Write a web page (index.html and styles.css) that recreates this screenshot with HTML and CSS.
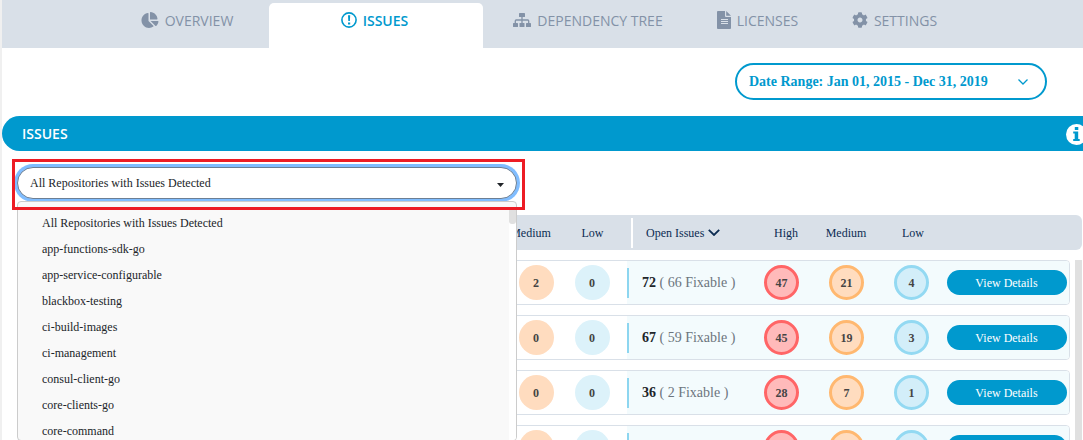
FILE: index.html
```html
<!DOCTYPE html>
<html lang="en">
<head>
<meta charset="utf-8">
<title>Issues</title>
<link rel="stylesheet" href="styles.css">
</head>
<body>
<div class="page">
  <nav class="tabs">
    <a class="tab tab-overview" href="#overview">
      <svg class="tab-icon" width="18" height="16" viewBox="0 0 544 512"><path fill="currentColor" d="M527.79 288H290.5l158.03 158.03c6.04 6.04 15.98 6.53 22.19.68 38.7-36.46 65.32-85.61 73.13-140.86 1.34-9.46-6.51-17.85-16.06-17.85zm-15.83-64.8C503.72 103.74 408.26 8.28 288.8.04 279.68-.59 272 7.1 272 16.24V240h223.77c9.14 0 16.82-7.68 16.19-16.8zM224 288V50.71c0-9.55-8.39-17.4-17.84-16.06C86.99 51.49-4.1 155.6.14 280.37 4.5 408.51 114.83 513.59 243.03 511.98c50.4-.63 96.97-16.87 135.26-44.03 7.9-5.6 8.42-17.23 1.57-24.08L224 288z"/></svg>
      <span class="tab-label">OVERVIEW</span></a>
    <a class="tab tab-active" href="#issues" aria-current="page">
      <svg class="tab-icon" width="16" height="16" viewBox="0 0 16 16"><circle cx="8" cy="8" r="7.1" fill="none" stroke="currentColor" stroke-width="1.6"/><path fill="currentColor" d="M7 3.2h2.2L8.9 9H7.3zM7 10.4h2.2v2.1H7z"/></svg>
      <span class="tab-label">ISSUES</span></a>
    <a class="tab" href="#dependency-tree">
      <svg class="tab-icon" width="18" height="16" viewBox="0 0 18 16"><g fill="currentColor"><rect x="6" y="1" width="6" height="4" rx=".6"/><rect x="0" y="11" width="5" height="4" rx=".6"/><rect x="6.5" y="11" width="5" height="4" rx=".6"/><rect x="13" y="11" width="5" height="4" rx=".6"/></g><path fill="none" stroke="currentColor" stroke-width="1.3" d="M9 5v6M2.3 11V8.9q0-.9.9-.9h11.6q.9 0 .9.9V11"/></svg>
      <span class="tab-label">DEPENDENCY TREE</span></a>
    <a class="tab" href="#licenses">
      <svg class="tab-icon" width="14" height="18" viewBox="0 0 14 18"><path fill="currentColor" fill-rule="evenodd" d="M.9 0H8v5.1q0 .9.9.9H14v11.1q0 .9-.9.9H.9Q0 18 0 17.1V.9Q0 0 .9 0zM9.200 0l4.800 4.800H9.200zM4 8v1h7V8zM4 10v1h7v-1zM4 12v1h7v-1z"/></svg>
      <span class="tab-label">LICENSES</span></a>
    <a class="tab" href="#settings">
      <svg class="tab-icon" width="16" height="16" viewBox="0 0 512 512"><path fill="currentColor" d="M487.4 315.7l-42.6-24.6c4.3-23.2 4.3-47 0-70.2l42.6-24.6c4.9-2.8 7.1-8.6 5.5-14-11.100-35.600-30-67.800-54.700-94.600-3.800-4.100-10-5.100-14.800-2.300L380.800 110c-17.900-15.400-38.500-27.300-60.800-35.100V25.800c0-5.600-3.900-10.500-9.400-11.700-36.700-8.200-74.300-7.800-109.200 0-5.500 1.200-9.400 6.100-9.400 11.700V75c-22.200 7.900-42.800 19.800-60.800 35.100L88.700 85.500c-4.900-2.800-11-1.900-14.800 2.300-24.700 26.700-43.600 58.900-54.700 94.600-1.700 5.400.6 11.200 5.500 14L67.300 221c-4.300 23.200-4.300 47 0 70.200l-42.600 24.600c-4.900 2.800-7.100 8.600-5.500 14 11.100 35.600 30 67.800 54.700 94.600 3.800 4.100 10 5.100 14.800 2.300l42.600-24.600c17.900 15.400 38.500 27.300 60.800 35.100v49.200c0 5.600 3.900 10.500 9.400 11.700 36.700 8.200 74.300 7.800 109.200 0 5.500-1.200 9.400-6.100 9.400-11.700v-49.200c22.200-7.900 42.800-19.800 60.800-35.100l42.600 24.600c4.900 2.800 11 1.900 14.800-2.300 24.700-26.700 43.600-58.900 54.700-94.600 1.500-5.500-.7-11.300-5.600-14.100zM256 336c-44.100 0-80-35.900-80-80s35.900-80 80-80 80 35.900 80 80-35.900 80-80 80z"/></svg>
      <span class="tab-label">SETTINGS</span></a>
  </nav>

  <div class="range-row">
    <div class="range">
      <select class="range-select" aria-label="Date range"><option>Date Range: Jan 01, 2015 - Dec 31, 2019</option></select>
      <svg class="range-chevron" width="10" height="6" viewBox="0 0 10 6"><path fill="none" stroke="currentColor" stroke-width="1.3" d="M.5.5 5 5 9.500.5"/></svg>
    </div>
  </div>

  <header class="section-bar">
    <h1 class="section-title">ISSUES</h1>
    <svg class="info-icon" width="21" height="21" viewBox="0 0 21 21" role="img" aria-label="Information"><circle cx="10.500" cy="10.500" r="10.500" fill="#fff"/><path fill="#0099ce" d="M8.800 3h3.500v3H8.800zM7.200 7.500h5V15h1.500v2H7.200v-2h1.500V9.500H7.200z"/></svg>
  </header>

  <div class="filter">
    <select class="repo-select" aria-label="Repository"><option>All Repositories with Issues Detected</option></select>
    <svg class="repo-caret" width="7" height="4" viewBox="0 0 7 4"><path fill="#212529" d="M0 0h7L3.500 4z"/></svg>
    <div class="menu">
      <ul class="menu-list">
        <li class="menu-item">All Repositories with Issues Detected</li>
        <li class="menu-item">app-functions-sdk-go</li>
        <li class="menu-item">app-service-configurable</li>
        <li class="menu-item">blackbox-testing</li>
        <li class="menu-item">ci-build-images</li>
        <li class="menu-item">ci-management</li>
        <li class="menu-item">consul-client-go</li>
        <li class="menu-item">core-clients-go</li>
        <li class="menu-item">core-command</li>
      </ul>
      <div class="menu-track"><div class="menu-thumb"></div></div>
    </div>
    <div class="highlight"></div>
  </div>

  <table class="issues">
    <thead>
      <tr class="head-row">
        <th></th><th>Medium</th><th class="head-low">Low</th>
        <th class="head-open">Open Issues <svg class="sort-icon" width="12" height="7" viewBox="0 0 12 7"><path fill="none" stroke="currentColor" stroke-width="1.800" d="M.8.8 6 6 11.200.8"/></svg></th>
        <th>High</th><th>Medium</th><th>Low</th><th></th>
      </tr>
    </thead>
    <tbody class="rows">
      <tr class="row">
        <td></td><td><span class="badge fixed-medium">2</span></td><td><span class="badge fixed-low">0</span></td>
        <td class="open"><span><b class="count">72</b> ( 66 Fixable )</span></td>
        <td class="tint"><span class="badge high">47</span></td><td class="tint"><span class="badge medium">21</span></td><td class="tint"><span class="badge low">4</span></td>
        <td class="tint"><button class="details" type="button">View Details</button></td>
      </tr>
      <tr class="row">
        <td></td><td><span class="badge fixed-medium">0</span></td><td><span class="badge fixed-low">0</span></td>
        <td class="open"><span><b class="count">67</b> ( 59 Fixable )</span></td>
        <td class="tint"><span class="badge high">45</span></td><td class="tint"><span class="badge medium">19</span></td><td class="tint"><span class="badge low">3</span></td>
        <td class="tint"><button class="details" type="button">View Details</button></td>
      </tr>
      <tr class="row">
        <td></td><td><span class="badge fixed-medium">0</span></td><td><span class="badge fixed-low">0</span></td>
        <td class="open"><span><b class="count">36</b> ( 2 Fixable )</span></td>
        <td class="tint"><span class="badge high">28</span></td><td class="tint"><span class="badge medium">7</span></td><td class="tint"><span class="badge low">1</span></td>
        <td class="tint"><button class="details" type="button">View Details</button></td>
      </tr>
      <tr class="row">
        <td></td><td><span class="badge fixed-medium"></span></td><td><span class="badge fixed-low"></span></td>
        <td class="open"></td>
        <td class="tint"><span class="badge high"></span></td><td class="tint"><span class="badge medium"></span></td><td class="tint"><span class="badge low"></span></td>
        <td class="tint"><button class="details" type="button" aria-label="View details"></button></td>
      </tr>
    </tbody>
  </table>
</div>
</body>
</html>
```

FILE: styles.css
```css
* { box-sizing: border-box; }

body {
  margin: 0;
  background: #fff;
  color: #212529;
  font: 12px/16px "Liberation Serif", "Times New Roman", serif;
}

.page {
  height: 100vh;
  overflow: hidden;
  border-left: 2px solid #f0f0f0;
}

.tabs {
  display: grid;
  grid-template-columns: 267fr 214fr 211fr 128fr 146fr 115fr;
  height: 48px;
  padding-top: 3px;
  background: #d9e0e8;
}

.tab {
  display: flex;
  justify-content: center;
  align-items: center;
  gap: 6px;
  padding: 0 1px 11px 0;
  border-radius: 5px 5px 0 0;
  color: #8392a7;
  font: 14px/20px "Open Sans", sans-serif;
  text-decoration: none;
  white-space: nowrap;
}

.tab-overview { padding-left: 104px; }

.tab-active {
  padding-right: 3px;
  background: #fff;
  color: #0099ce;
  font-weight: 600;
}

.tab-label { padding-top: 2px; }

.tab-icon { flex: none; }

.range-row {
  display: flex;
  justify-content: flex-end;
  padding: 15px 36px 16px 0;
}

.range {
  position: relative;
  color: #0099ce;
}

.range-select {
  appearance: none;
  display: block;
  width: 312px;
  height: 37px;
  padding: 0 40px 0 12px;
  border: 2px solid #0099ce;
  border-radius: 19px;
  background: #fff;
  color: inherit;
  font: bold 14px/20px "Liberation Serif", "Times New Roman", serif;
}

.range-chevron {
  position: absolute;
  top: 16px;
  right: 19px;
  pointer-events: none;
}

.section-bar {
  display: flex;
  justify-content: space-between;
  align-items: center;
  height: 35px;
  padding: 1px 0 0 20px;
  border-radius: 18px 0 0 18px;
  background: #0099ce;
}

.section-title {
  margin: 0;
  color: #fff;
  font: 600 14px/20px "Open Sans", sans-serif;
}

.info-icon {
  flex: none;
  margin-right: -4px;
}

.filter {
  position: relative;
  width: 500px;
  margin: 16px 0 16px 15px;
}

.repo-select {
  appearance: none;
  display: block;
  width: 100%;
  height: 32px;
  padding: 0 32px 0 12px;
  border: 1px solid #6c7f94;
  border-radius: 16px;
  outline: none;
  background: #fff;
  box-shadow: 0 0 0 3px #80bdff;
  color: #212529;
  font: 12px/16px "Liberation Serif", "Times New Roman", serif;
}

.repo-caret {
  position: absolute;
  top: 16px;
  right: 13px;
  pointer-events: none;
}

.menu {
  position: absolute;
  z-index: 1;
  top: 34px;
  left: 0;
  right: 0;
  display: flex;
  height: 240px;
  padding-top: 8px;
  overflow: hidden;
  border: 1px solid #ccc;
  border-radius: 4px;
  background: #f9f9f9;
}

.menu-list {
  flex: 1;
  margin: 0;
  padding: 0;
  list-style: none;
}

.menu-item {
  padding: 5px 24px;
}

.menu-track {
  width: 7px;
  background: #fff;
}

.menu-thumb {
  height: 14px;
  border-radius: 0 0 3px 3px;
  background: #e0e0e0;
}

.highlight {
  position: absolute;
  z-index: 2;
  top: -8px;
  left: -5px;
  right: -8px;
  height: 51px;
  border: 3px solid #ed1c24;
  pointer-events: none;
}

.issues {
  display: block;
  margin-left: 16px;
  padding-right: 1px;
}

.issues thead { display: block; }

.head-row {
  display: grid;
  grid-template-columns: 1fr 57px 72px 123px 64px 56px 78px 130px;
  align-items: center;
  height: 35px;
  border-radius: 6px;
  background: #d9e0e8;
  color: #0c2c52;
}

.head-row th {
  padding: 0;
  font-weight: normal;
}

.head-row .head-low { padding-right: 5px; }

.head-row .head-open {
  display: flex;
  align-items: center;
  gap: 4px;
  height: 30px;
  padding-left: 13px;
  border-left: 2px solid #fff;
}

.rows {
  display: grid;
  gap: 10px;
  margin-top: 10px;
  padding-right: 5px;
  border-right: 7px solid #e0e0e0;
}

.row {
  display: grid;
  grid-template-columns: 1fr 56px 63px 122px 65px 65px 65px 125px;
  height: 45px;
  overflow: hidden;
  border: 1px solid #d9e0e8;
  border-radius: 4px;
}

.row td {
  display: flex;
  justify-content: center;
  align-items: center;
  padding: 0;
}

.row td:nth-child(3) { padding-right: 7px; }

.row .open {
  justify-content: flex-start;
  background: linear-gradient(#8dd6f0, #8dd6f0) left center / 2px 30px no-repeat #f3fbfd;
  padding-left: 15px;
  color: #6c757d;
  font-size: 14px;
}

.count { color: #212529; }

.row .tint { background: #f3fbfd; }

.badge {
  display: flex;
  justify-content: center;
  align-items: center;
  width: 35px;
  height: 35px;
  border-radius: 50%;
  color: #444;
  font-weight: bold;
}

.fixed-medium { background: #ffdcbf; }
.fixed-low { background: #dcf2fa; }
.high { border: 3px solid #ff6566; background: #ffbaba; }
.medium { border: 3px solid #ffb870; background: #ffdcbf; }
.low { border: 3px solid #93d9f2; background: #d3eef9; }

.details {
  width: 120px;
  height: 25px;
  padding: 0;
  border: 0;
  border-radius: 13px;
  background: #0099ce;
  color: #fff;
  font: 12px/16px "Liberation Serif", "Times New Roman", serif;
}
```
